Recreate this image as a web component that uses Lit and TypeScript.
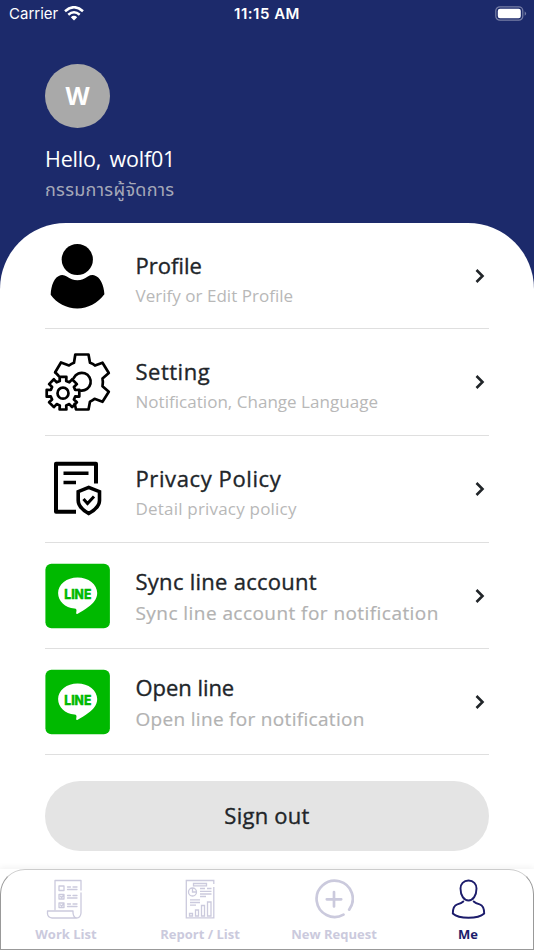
import { LitElement, html, css, TemplateResult } from "lit";
import { customElement, property } from "lit/decorators.js";
import { styleMap } from "lit/directives/style-map.js";

const gear = (cx: number, cy: number, ri: number, ro: number, n: number, start: number) => {
  const pts: string[] = [];
  const step = (Math.PI * 2) / n;
  for (let i = 0; i < n; i++) {
    const a = start + i * step;
    for (const [r, o] of [[ri, -0.33], [ro, -0.26], [ro, 0.26], [ri, 0.33]]) {
      pts.push(`${(cx + r * Math.cos(a + o * step)).toFixed(1)} ${(cy + r * Math.sin(a + o * step)).toFixed(1)}`);
    }
  }
  return `M${pts.join("L")}Z`;
};

const lineLogo = html`<svg viewBox="0 0 65 65" width="65" height="65">
  <rect x=".4" y=".7" width="64.500" height="64.500" rx="6" fill="#00b900" />
  <path d="M32.600 14.400C43.400 14.400 52.200 21.200 52.200 30c0 6-4.200 10.500-9 14.100-3.600 2.700-7.200 4.800-10.500 6.600-1.500.7-1.700-.2-1.400-1.600.5-2.200.2-3.300-1.800-3.500C20 44.600 13.100 38.300 13.100 30c0-8.800 8.700-15.600 19.500-15.600Z" fill="#fff" />
  <text x="19.300" y="35.500" textLength="27" lengthAdjust="spacingAndGlyphs" font-family="Inter, sans-serif" font-size="13.500" font-weight="800" fill="#00b900" stroke="#00b900" stroke-width=".4">LINE</text>
</svg>`;

const icons: Record<string, TemplateResult> = {
  profile: html`<svg viewBox="0 0 65 65" width="65" height="65">
    <circle cx="32.300" cy="16.500" r="15.600" />
    <path d="M15.500 32.300q3.200-.8 6.300 1.300 4.800 3.700 10.600 3.700t10.400-3.700q3.200-2 6.300-1.300C55.200 33.800 59 42.300 59.400 51.300 52.500 60.300 43 65.500 32.300 65.500S11.500 60.300 5.700 51.800C6 42.300 9.500 33.800 15.500 32.300Z" />
  </svg>`,
  setting: html`<svg viewBox="0 -3.300 65 65" width="65" height="65" fill="none" stroke="#000" stroke-width="2.700" stroke-linejoin="round" stroke-linecap="round">
    <path d="M10.200 19 16 9.200 24 12.200Q26.500 10.300 29 9.500L30.300 1.200H43.500L45 9.500Q48 10.500 50 12.300L57.500 9.400 63.800 19.700 57.500 25.300Q58.300 29.200 57.500 33L63.800 38.500 57.500 48.500 49.500 45.500Q47.500 47 45 48.300L43.500 56.200H31L29.700 50.500" />
    <path d="M10.200 19 13.500 22.500M28.800 24.500A8.900 8.900 0 1 1 36 37.300" />
    <path d=${gear(18, 39.9, 12.6, 16.6, 8, Math.PI / 2)} />
    <circle cx="18" cy="39.900" r="5.500" />
  </svg>`,
  privacy: html`<svg viewBox="0 -.5 65 65" width="65" height="65" fill="none" stroke="#000" stroke-width="4">
    <path d="M31 54.300H11V6.200H51V26" stroke-linejoin="round" />
    <path d="M18.500 15.800H43.500M18.500 25H31" stroke-width="3.600" />
    <path d="M43.700 29.900 54.500 34.200V43Q54.500 50 43.700 56 33.200 50 33.200 43V34.200Z" stroke-width="3.600" />
    <path d="m38.500 41.500 4 4.500 6.500-7" stroke-width="3" />
  </svg>`,
  line: lineLogo,
  work: html`<svg viewBox="1 0 40 40" width="40" height="40" fill="none" stroke="#cbcadd" stroke-width="1.300" stroke-linecap="round" stroke-linejoin="round">
    <path d="M10 30.500V1.500H36V11M36 14V34Q35.500 39 31.500 39H7Q3 38.500 2.500 35V32H28V34Q28.500 38.500 31.500 39" />
    <path d="M14 7h5v4.500h-5zM14 15.500h5V20h-5zM14 24h5v4.500h-5zM22.500 8h3M28 8h4M22.500 10.500h9.500M22.500 16.500h3M28 16.500h4M22.500 19h9.500M22.500 25h3M28 25h4M22.500 27.500h9.500M15.500 17.500l1.200 1 2.300-2.500M15.500 26l1.200 1 2.300-2.500" />
  </svg>`,
  report: html`<svg viewBox="0 0 40 40" width="40" height="40" fill="none" stroke="#cbcadd" stroke-width="1.300">
    <path d="M33.800 5V1.500H6.300V38.800H33.800V8M6.300 5.500v3M13.500 4.500h13v2.300h-13z" />
    <circle cx="12.500" cy="13" r="4" /><path d="M12.500 9v4h4M20 9.500h5M27 9.500h4.500M20 12.300h11.500M20 15h11.500M20 17.500h6M10 20.800h10M10 23.500h10M10 26.200h6" />
    <path d="M9.500 34.500h3V37h-3zM15.500 31h3v6h-3zM21.500 26.500h3V37h-3zM27.500 23h3.500V37h-3.500z" />
  </svg>`,
  add: html`<svg viewBox="0 -.3 40 40" width="40" height="40" fill="none" stroke="#cbcadd" stroke-width="2.700" stroke-linecap="round">
    <path d="M29.500 35.300A18.100 18.100 0 1 1 35.200 30.300M12.800 20H27.200M20 12.800V27.200" />
  </svg>`,
  me: html`<svg viewBox="-.5 0 40 40" width="40" height="40" fill="none" stroke="#1c1c6b" stroke-width="1.900" stroke-linecap="round" stroke-linejoin="round">
    <path d="M20 1.500C25 1.500 28 5 28 9.500 28 16.500 24.500 21.500 20 21.500S12 16.500 12 9.500C12 5 15 1.500 20 1.500Z" />
    <path d="M14.800 22.500Q13 24.200 8.800 25.300 4.300 26.700 4.300 34.500 9 38.800 20 38.800T35.700 34.500Q35.700 26.700 31.200 25.300 27 24.200 25.200 22.500" />
  </svg>`,
};

interface Item { icon: string; title: string; sub: string; ts: number; ss: number; height: number; big?: boolean }
const items: Item[] = [
  { icon: "profile", title: "Profile", sub: "Verify or Edit Profile", ts: 0, ss: 0.03, height: 106 },
  { icon: "setting", title: "Setting", sub: "Notification, Change Language", ts: 0.5, ss: 0.03, height: 107 },
  { icon: "privacy", title: "Privacy Policy", sub: "Detail privacy policy", ts: 0.6, ss: 0.2, height: 107 },
  { icon: "line", title: "Sync line account", sub: "Sync line account for notification", ts: 0.27, ss: 0.44, height: 106, big: true },
  { icon: "line", title: "Open line", sub: "Open line for notification", ts: -0.05, ss: 0.31, height: 106, big: true },
];

@customElement("menu-row")
export class MenuRow extends LitElement {
  @property({ attribute: false }) item!: Item;
  static styles = css`
    :host { display: flex; align-items: center; box-sizing: border-box; border-bottom: 1px solid #dfdfdf; }
    .icon { width: 65px; height: 65px; margin-right: 25.500px; flex: none; }
    svg { display: block; overflow: visible; }
    .text { flex: 1; white-space: nowrap; padding-top: 10px; }
    .title { font-size: 22px; line-height: 30px; font-weight: 500; color: #212529; -webkit-text-stroke: .35px #212529; }
    .sub { font-size: 17px; line-height: 32px; color: #b8b8b8; }
    .big { padding-top: 4px; }
    .big .sub { font-size: 19px; line-height: 34px; color: #b2b2b2; -webkit-text-stroke: .2px #b2b2b2; }
    .chev { flex: none; margin-right: 3px; }
  `;
  render() {
    const i = this.item;
    return html`<div class="icon">${icons[i.icon]}</div>
      <div class=${i.big ? "text big" : "text"}>
        <div class="title"><span style=${styleMap({ letterSpacing: `${i.ts}px` })}>${i.title}</span></div>
        <div class="sub"><span style=${styleMap({ letterSpacing: `${i.ss}px` })}>${i.sub}</span></div>
      </div>
      <svg class="chev" width="12" height="16" viewBox="0 0 12 16" fill="none" stroke="#212529" stroke-width="2.600"><path d="m2.500 2 6 6-6 6" /></svg>`;
  }
}

const tabs = [
  { icon: "work", label: "Work List" },
  { icon: "report", label: "Report / List" },
  { icon: "add", label: "New Request" },
  { icon: "me", label: "Me" },
];

@customElement("app-root")
export class AppRoot extends LitElement {
  static styles = css`
    :host { display: flex; flex-direction: column; width: 534px; height: 950px; overflow: hidden; background: #1c2a6b; font-family: "Open Sans", "Noto Sans Thai", "Noto Sans", sans-serif; }
    .status { height: 28px; flex: none; display: grid; grid-template-columns: 1fr auto 1fr; align-items: center; padding: 0 7px 0 9px; box-sizing: border-box; color: #fff; font: 400 15px/28px Inter, sans-serif; }
    .left { display: flex; align-items: center; gap: 6px; }
    .left svg { position: relative; top: -1px; }
    .time { font-weight: 600; font-size: 15px; letter-spacing: .5px; margin-right: 2px; }
    .battery { justify-self: end; display: block; position: relative; top: -1px; }
    .head { height: 195px; flex: none; box-sizing: border-box; padding: 36px 45px 0; color: #fff; white-space: nowrap; }
    .avatar { width: 65px; height: 64px; border-radius: 50%; background: #a9a9a9; display: grid; place-items: center; font-size: 25px; line-height: 62px; font-weight: 700; align-content: start; }
    .hello { font-size: 21.500px; line-height: 30px; margin-top: 16px; word-spacing: 3px; letter-spacing: -.2px; }
    .role { font-size: 18px; line-height: 30px; font-weight: 400; color: #a5a8b8; letter-spacing: .3px; }
    .sheet { flex: 1; background: #fff; border-radius: 66px 66px 0 0; padding: 0 45px; }
    .signout { margin: 26px 0 0; width: 444px; height: 70px; border: 0; border-radius: 35px; background: #e4e4e4; color: #212529; font: 500 22px/68px "Open Sans", sans-serif; letter-spacing: .25px; -webkit-text-stroke: .35px #212529; padding: 0 0 2px; display: block; }
    .tabs { height: 81px; flex: none; box-sizing: border-box; background: #fff; border: 1px solid #999; border-top-color: #ccc; border-radius: 25px 25px 0 0; display: grid; grid-template-columns: repeat(4, 134px); }
    .foot { background: #fff; box-shadow: 0 -2px 6px rgba(0,0,0,.05); }
    .tab { display: flex; flex-direction: column; align-items: center; padding-top: 9px; font-size: 13px; line-height: 20px; font-weight: 700; color: #cbcadd; gap: 5px; white-space: nowrap; margin-left: -4px; }
    .tab svg { display: block; }
    .on { color: #1c1c6b; }
  `;
  render() {
    return html`
      <div class="status">
        <div class="left"><span>Carrier</span>
          <svg width="20" height="15" viewBox="0 0 20 15" fill="none" stroke="#fff" stroke-width="2.500"><path d="M1 5.200Q10-2.800 19 5.200M4.300 8.800Q10 3.800 15.700 8.800" /><path d="M6.800 11.200Q10 8.500 13.200 11.200L10 14.500Z" fill="#fff" stroke="none" /></svg>
        </div>
        <div class="time">11:15 AM</div>
        <svg class="battery" width="32" height="15" viewBox="0 0 32 15"><rect x=".8" y=".8" width="27" height="13.400" rx="4" fill="none" stroke="#777fa6" stroke-width="1.200" /><rect x="2.800" y="2.800" width="23" height="9.400" rx="2.200" fill="#fff" /><path d="M29.700 5.200q2.800 2.300 0 4.600Z" fill="#777fa6" /></svg>
      </div>
      <div class="head">
        <div class="avatar">W</div>
        <div class="hello">Hello, wolf01</div>
        <div class="role">กรรมการผู้จัดการ</div>
      </div>
      <div class="sheet">
        ${items.map((i) => html`<menu-row .item=${i} style=${styleMap({ height: `${i.height}px` })}></menu-row>`)}
        <button class="signout">Sign out</button>
      </div>
      <div class="foot"><div class="tabs">
        ${tabs.map((t) => html`<div class=${t.icon === "me" ? "tab on" : "tab"}>${icons[t.icon]}<span>${t.label}</span></div>`)}
      </div></div>`;
  }
}
